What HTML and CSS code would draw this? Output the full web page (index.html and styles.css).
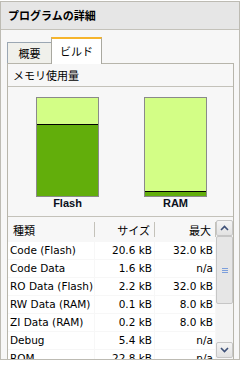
FILE: index.html
```html
<!DOCTYPE html>
<html lang="ja">

<head>
    <meta charset="UTF-8">
    <meta name="viewport" content="width=device-width, initial-scale=1.0">
    <title>プログラムの詳細</title>
    <link rel="stylesheet" href="styles.css">
</head>

<body>
    <section class="panel">
        <div class="panel_head">プログラムの詳細</div>
        <div class="panel_body">
            <div class="tabs">
                <div class="tab">概要</div>
                <div class="tab tab_active">ビルド</div>
            </div>
            <div class="tab_page">
                <div class="section_title">メモリ使用量</div>
                <div class="chart">
                    <div class="chart_item">
                        <div class="bar"><div class="bar_fill" style="height: 72px"></div></div>
                        <div class="bar_label">Flash</div>
                    </div>
                    <div class="chart_item">
                        <div class="bar"><div class="bar_fill" style="height: 5px"></div></div>
                        <div class="bar_label">RAM</div>
                    </div>
                </div>
                <div class="table_wrap">
                    <div class="grid">
                        <div class="th">種類</div>
                        <div class="th th_num">サイズ</div>
                        <div class="th th_num">最大</div>

                        <div class="td">Code (Flash)</div>
                        <div class="td td_num">20.6 kB</div>
                        <div class="td td_num">32.0 kB</div>

                        <div class="td">Code Data</div>
                        <div class="td td_num">1.6 kB</div>
                        <div class="td td_num">n/a</div>

                        <div class="td">RO Data (Flash)</div>
                        <div class="td td_num">2.2 kB</div>
                        <div class="td td_num">32.0 kB</div>

                        <div class="td">RW Data (RAM)</div>
                        <div class="td td_num">0.1 kB</div>
                        <div class="td td_num">8.0 kB</div>

                        <div class="td">ZI Data (RAM)</div>
                        <div class="td td_num">0.2 kB</div>
                        <div class="td td_num">8.0 kB</div>

                        <div class="td">Debug</div>
                        <div class="td td_num">5.4 kB</div>
                        <div class="td td_num">n/a</div>

                        <div class="td">ROM</div>
                        <div class="td td_num">22.8 kB</div>
                        <div class="td td_num">n/a</div>
                    </div>
                    <div class="scrollbar">
                        <div class="scroll_btn">
                            <svg width="9" height="6" viewBox="0 0 9 6"><polyline points="1,5 4.5,1.5 8,5" fill="none" stroke="#3d5078" stroke-width="1.6"/></svg>
                        </div>
                        <div class="scroll_thumb"><span></span><span></span><span></span></div>
                        <div class="scroll_track"></div>
                        <div class="scroll_btn">
                            <svg width="9" height="6" viewBox="0 0 9 6"><polyline points="1,1 4.5,4.5 8,1" fill="none" stroke="#3d5078" stroke-width="1.6"/></svg>
                        </div>
                    </div>
                </div>
            </div>
        </div>
    </section>
</body>

</html>
```

FILE: styles.css
```css
body {
    margin: 0;
    background: #ffffff;
    font-family: "DejaVu Sans", "Noto Sans CJK JP", sans-serif;
    font-size: 10.5px;
    color: #000000;
}

.panel {
    margin-top: 1px;
    width: 240px;
    height: 359px;
    box-sizing: border-box;
    border: 1px solid #bdbbb3;
    display: flex;
    flex-direction: column;
}

.panel_head {
    height: 27px;
    line-height: 27px;
    padding-left: 7px;
    background: #e6e6e6;
    border-bottom: 1px solid #c4c2ba;
    font-family: "Noto Sans CJK JP", sans-serif;
    font-weight: bold;
    font-size: 11px;
}

.panel_body {
    flex: 1;
    min-height: 0;
    display: flex;
    flex-direction: column;
    background: #f7f7f7;
    padding: 7px 5px 0 6px;
}

.tabs {
    display: flex;
    align-items: flex-end;
    height: 26px;
    position: relative;
    z-index: 1;
}

.tab {
    width: 43px;
    height: 20px;
    line-height: 20px;
    text-align: center;
    background: #f0f0eb;
    border: 1px solid #9ba7b3;
    border-right: none;
    border-bottom: none;
    font-family: "Noto Sans CJK JP", sans-serif;
    font-size: 11px;
}

.tab_active {
    width: 49px;
    height: 25px;
    line-height: 24px;
    margin-bottom: -1px;
    background: #ffffff;
    border: 1px solid #a9a8a0;
    border-top: 2px solid #f6b52d;
    border-bottom: none;
}

.tab_page {
    flex: 1;
    min-height: 0;
    display: flex;
    flex-direction: column;
    border: 1px solid #b7b5ab;
    border-bottom: none;
}

.section_title {
    height: 22px;
    line-height: 23px;
    padding-left: 5px;
    border-bottom: 1px solid #c4c2ba;
    font-family: "Noto Sans CJK JP", sans-serif;
    font-size: 11px;
}

.chart {
    height: 130px;
    box-sizing: border-box;
    padding: 10px 0 0 28px;
    border-bottom: 1px solid #c4c2ba;
    display: flex;
    gap: 45px;
}

.chart_item {
    width: 63px;
}

.bar {
    height: 100px;
    box-sizing: border-box;
    border: 1px solid #8a8a8a;
    background: #d3fe86;
    display: flex;
    flex-direction: column;
    justify-content: flex-end;
}

.bar_fill {
    background: #62ae0b;
    border-top: 1px solid #000000;
    box-sizing: border-box;
}

.bar_label {
    text-align: center;
    font-family: "Liberation Sans", sans-serif;
    font-weight: bold;
    font-size: 11px;
    line-height: 13px;
    color: #0a1020;
}

.table_wrap {
    flex: 1;
    min-height: 0;
    display: flex;
    padding-top: 3px;
    overflow: hidden;
}

.grid {
    display: grid;
    grid-template-columns: 86px 59px 60px;
    column-gap: 1px;
    grid-auto-rows: 18px;
    grid-template-rows: 21px;
    align-content: start;
    width: 208px;
}

.th {
    position: relative;
    line-height: 20px;
    padding-left: 5px;
    font-family: "Noto Sans CJK JP", sans-serif;
    font-size: 11px;
}

.th::after {
    content: "";
    position: absolute;
    right: -1px;
    top: 2px;
    height: 15px;
    border-right: 1px solid #c4c2ba;
}

.th_num {
    text-align: right;
    padding: 0 4px 0 0;
}

.td {
    background: #ffffff;
    margin-top: 1px;
    line-height: 17px;
    padding-left: 2px;
    white-space: nowrap;
}

.td_num {
    text-align: right;
    padding: 0 2px 0 0;
}

.scrollbar {
    width: 17px;
    margin: 0 0 1px 1px;
    display: flex;
    flex-direction: column;
    background: #f4f4f4;
}

.scroll_btn {
    height: 16px;
    box-sizing: border-box;
    border: 1px solid #c6c6c6;
    border-radius: 2px;
    background: linear-gradient(#f4f4f4, #e2e2e2);
    display: flex;
    align-items: center;
    justify-content: center;
}

.scroll_thumb {
    height: 68px;
    box-sizing: border-box;
    border: 1px solid #c6c6c6;
    border-radius: 2px;
    background: #e6e6e6;
    display: flex;
    flex-direction: column;
    align-items: center;
    justify-content: center;
    gap: 1px;
}

.scroll_thumb span {
    width: 6px;
    height: 1px;
    background: #7c9fdc;
}

.scroll_track {
    flex: 1;
}
```
